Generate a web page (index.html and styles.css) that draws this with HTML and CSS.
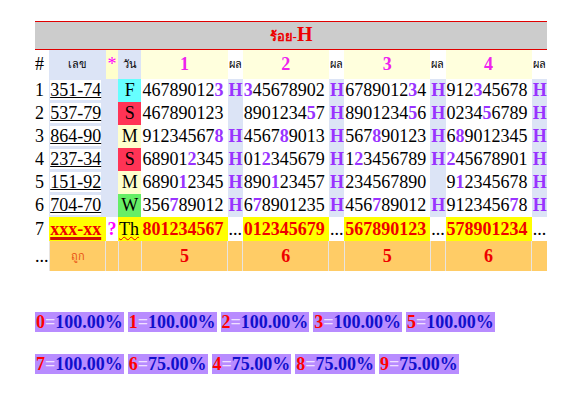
FILE: index.html
```html
<!DOCTYPE html>
<html lang="th">
<head>
    <meta charset="UTF-8">
    <title>ร้อย-H</title>
    <link rel="stylesheet" href="styles.css">
</head>
<body>
    <table class="grid">
        <colgroup>
            <col class="c-no"><col class="c-num"><col class="c-star"><col class="c-day">
            <col class="c-val"><col class="c-res"><col class="c-val"><col class="c-res">
            <col class="c-val"><col class="c-res"><col class="c-val"><col class="c-res">
        </colgroup>
        <tr class="title"><td colspan="12">ร้อย-<b>H</b></td></tr>
        <tr class="head">
            <td class="no">#</td>
            <td class="blue small">เลข</td>
            <td class="star">*</td>
            <td class="blue small">วัน</td>
            <td class="col">1</td><td class="small res-h">ผล</td>
            <td class="col">2</td><td class="small res-h">ผล</td>
            <td class="col">3</td><td class="small res-h">ผล</td>
            <td class="col">4</td><td class="small res-h">ผล</td>
        </tr>
        <tr>
            <td class="no">1</td><td class="num"><a>351-74</a></td><td class="blue"></td><td class="day fri">F</td>
            <td>46789012<i>3</i></td><td class="h">H</td>
            <td><i>3</i>45678902</td><td class="h">H</td>
            <td>6789012<i>3</i>4</td><td class="h">H</td>
            <td>912<i>3</i>45678</td><td class="h">H</td>
        </tr>
        <tr>
            <td class="no">2</td><td class="num"><a>537-79</a></td><td class="blue"></td><td class="day sat">S</td>
            <td>467890123</td><td class="h"></td>
            <td>8901234<i>5</i>7</td><td class="h">H</td>
            <td>8901234<i>5</i>6</td><td class="h">H</td>
            <td>0234<i>5</i>6789</td><td class="h">H</td>
        </tr>
        <tr>
            <td class="no">3</td><td class="num"><a>864-90</a></td><td class="blue"></td><td class="day mon">M</td>
            <td>91234567<i>8</i></td><td class="h">H</td>
            <td>4567<i>8</i>9013</td><td class="h">H</td>
            <td>567<i>8</i>90123</td><td class="h">H</td>
            <td>6<i>8</i>9012345</td><td class="h">H</td>
        </tr>
        <tr>
            <td class="no">4</td><td class="num"><a>237-34</a></td><td class="blue"></td><td class="day sat">S</td>
            <td>68901<i>2</i>345</td><td class="h">H</td>
            <td>01<i>2</i>345679</td><td class="h">H</td>
            <td>1<i>2</i>3456789</td><td class="h">H</td>
            <td><i>2</i>45678901</td><td class="h">H</td>
        </tr>
        <tr>
            <td class="no">5</td><td class="num"><a>151-92</a></td><td class="blue"></td><td class="day mon">M</td>
            <td>6890<i>1</i>2345</td><td class="h">H</td>
            <td>890<i>1</i>23457</td><td class="h">H</td>
            <td>234567890</td><td class="h"></td>
            <td>9<i>1</i>2345678</td><td class="h">H</td>
        </tr>
        <tr>
            <td class="no">6</td><td class="num"><a>704-70</a></td><td class="blue"></td><td class="day wed">W</td>
            <td>356<i>7</i>89012</td><td class="h">H</td>
            <td>6<i>7</i>8901235</td><td class="h">H</td>
            <td>456<i>7</i>89012</td><td class="h">H</td>
            <td>9123456<i>7</i>8</td><td class="h">H</td>
        </tr>
        <tr class="next">
            <td class="no">7</td><td class="num"><a>xxx-xx</a></td><td class="q">?</td><td class="th"><u>Th</u></td>
            <td>801234567</td><td class="dots">...</td>
            <td>012345679</td><td class="dots">...</td>
            <td>567890123</td><td class="dots">...</td>
            <td>578901234</td><td class="dots">...</td>
        </tr>
        <tr class="sum">
            <td class="dots no">...</td><td class="ok">ถูก</td><td></td><td></td>
            <td>5</td><td></td><td>6</td><td></td><td>5</td><td></td><td>6</td><td></td>
        </tr>
    </table>

    <div class="stats">
        <div class="line">
            <span class="st"><i>0</i>=<b>100.00%</b></span>
            <span class="st"><i>1</i>=<b>100.00%</b></span>
            <span class="st"><i>2</i>=<b>100.00%</b></span>
            <span class="st"><i>3</i>=<b>100.00%</b></span>
            <span class="st"><i>5</i>=<b>100.00%</b></span>
        </div>
        <div class="line">
            <span class="st"><i>7</i>=<b>100.00%</b></span>
            <span class="st"><i>6</i>=<b>75.00%</b></span>
            <span class="st"><i>4</i>=<b>75.00%</b></span>
            <span class="st"><i>8</i>=<b>75.00%</b></span>
            <span class="st"><i>9</i>=<b>75.00%</b></span>
        </div>
    </div>
</body>
</html>
```

FILE: styles.css
```css
body {
    margin: 21px 0 0 35px;
    font-family: "Liberation Serif", "Times New Roman", serif;
    color: #000;
    background: #fff;
}
.grid {
    table-layout: fixed;
    width: 512px;
    border-collapse: collapse;
    font-size: 18px;
}
.c-no { width: 14px; }
.c-num { width: 56px; }
.c-star { width: 12px; }
.c-day { width: 23px; }
.c-val { width: 85px; }
.c-res { width: 15px; }
.grid td {
    padding: 0 1px;
    height: 23px;
    line-height: 21px;
    white-space: nowrap;
    overflow: hidden;
}
.grid td.no {
    padding: 0;
}
.title td {
    height: 27px;
    background: #cccccc;
    border-top: 1px solid #e00000;
    border-bottom: 1px solid #e00000;
    text-align: center;
    color: #ee0000;
    font-size: 13px;
    font-weight: bold;
}
.title b {
    font-size: 20px;
}
.head td {
    height: 29px;
    text-align: center;
}
.head .no {
    text-align: left;
}
.small {
    font-family: Tahoma, "DejaVu Sans", sans-serif;
    font-size: 11px;
}
.blue {
    background: #dce4f6;
}
.star {
    color: #ff00ff;
    background: #ffffcc;
}
.head .col {
    color: #ee22ee;
    font-weight: bold;
    background: #ffffdd;
}
.res-h {
    background: #fff;
}
.num {
    background: #dce4f6;
}
.num a {
    color: #000;
    text-decoration: underline;
    background: #fff;
}
.day {
    text-align: center;
}
.fri { background: #66ffff; }
.sat { background: #ff3355; }
.mon { background: #ffffcc; }
.wed { background: #66ee66; }
.grid i {
    font-style: normal;
    font-weight: bold;
    color: #9933ff;
}
.h {
    background: #dce4f6;
    color: #9933ff;
    font-weight: bold;
    text-align: center;
}
.next td {
    height: 24px;
    background: #ffff00;
    color: #ee0000;
    font-weight: bold;
}
.next .no {
    color: #000;
    font-weight: normal;
    background: #fff;
}
.next .num a {
    color: #ee0000;
    background: #ffff00;
    text-decoration-thickness: 3px;
    text-decoration-color: #cc1100;
}
.next .q {
    color: #ff00ff;
    background: #fff;
    text-align: center;
}
.next .th {
    color: #000;
    font-weight: normal;
}
.next .th u {
    text-decoration: underline wavy #ee0000;
    text-decoration-thickness: 1px;
}
.next .dots,
.sum .dots {
    background: #fff;
    color: #000;
    font-weight: normal;
}
.sum td {
    height: 30px;
    background: #ffcc66;
    color: #ee0000;
    font-weight: bold;
    text-align: center;
    border-left: 1px solid #e8e4e0;
}
.sum td.dots {
    border-left: 0;
    text-align: left;
}
.sum .ok {
    font-family: Tahoma, "DejaVu Sans", sans-serif;
    font-size: 11px;
    font-weight: normal;
    color: #e85010;
}
.stats {
    margin-top: 41px;
    font-size: 18px;
    font-weight: bold;
}
.line {
    display: flex;
    gap: 4px;
    margin-bottom: 22px;
}
.st {
    background: #b88cff;
    padding: 0 1px;
    line-height: 20px;
    color: #f0e0ff;
}
.st i {
    font-style: normal;
    color: #ff0000;
}
.st b {
    color: #1010cc;
}
```
